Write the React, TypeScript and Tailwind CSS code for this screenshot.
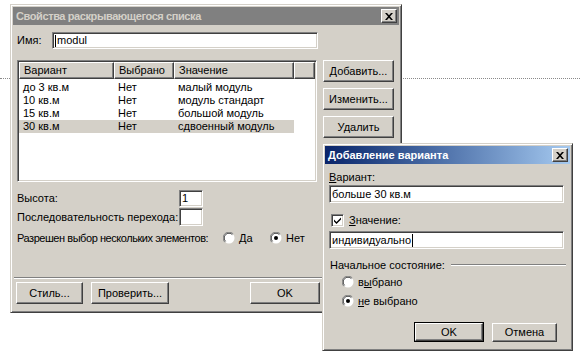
import type { ReactNode } from 'react'

const font = { fontFamily: '"Liberation Sans", Arial, sans-serif' }

const sunken =
  'border border-t-[#808080] border-l-[#808080] border-b-white border-r-white bg-white shadow-[inset_1px_1px_0_#404040,inset_-1px_-1px_0_#d4d0c8]'
const raised =
  'border border-t-white border-l-white border-b-[#404040] border-r-[#404040] bg-[#d4d0c8] shadow-[inset_-1px_-1px_0_#808080,inset_1px_1px_0_#d4d0c8]'

function CloseBox() {
  return (
    <div className={`${raised} flex h-[14px] w-[16px] items-center justify-center`}>
      <svg width="8" height="7" viewBox="0 0 8 7">
        <path d="M0 0h2l2 2.2L6 0h2L5 3.5 8 7H6L4 4.8 2 7H0l3-3.5z" fill="#000" />
      </svg>
    </div>
  )
}

function Radio({ checked }: { checked?: boolean }) {
  return (
    <svg width="12" height="12" viewBox="0 0 12 12" className="shrink-0">
      <circle cx="6" cy="6" r="5.5" fill="#fff" />
      <path d="M10.2 1.8A5.5 5.5 0 0 0 1.8 10.2" stroke="#808080" strokeWidth="1" fill="none" />
      <path d="M9.4 2.6A4.4 4.4 0 0 0 2.6 9.4" stroke="#404040" strokeWidth="1" fill="none" />
      {checked && <circle cx="6" cy="6" r="2" fill="#000" />}
    </svg>
  )
}

function Checkbox() {
  return (
    <div className={`${sunken} flex h-[13px] w-[13px] shrink-0 items-center justify-center`}>
      <svg width="7" height="7" viewBox="0 0 7 7">
        <path d="M0 2.5l2.5 2.5L7 0.5V2.5L2.5 7 0 4.5z" fill="#000" />
      </svg>
    </div>
  )
}

function Btn({ children, w, def }: { children: ReactNode; w: string; def?: boolean }) {
  return (
    <div className={def ? 'border border-black' : ''}>
      <div className={`${raised} ${w} ${def ? 'h-[18px]' : 'h-[22px]'} flex items-center justify-center text-[11px]`}>
        {children}
      </div>
    </div>
  )
}

const rows = [
  ['до 3 кв.м', 'Нет', 'малый модуль'],
  ['10 кв.м', 'Нет', 'модуль стандарт'],
  ['15 кв.м', 'Нет', 'большой модуль'],
  ['30 кв.м', 'Нет', 'сдвоенный модуль'],
]

function MainDialog() {
  return (
    <div className="absolute left-[10px] top-[4px] h-[309px] w-[392px] border border-t-[#d4d0c8] border-l-[#d4d0c8] border-b-[#404040] border-r-[#404040] bg-[#d4d0c8] p-[2px] shadow-[inset_1px_1px_0_#fff,inset_-1px_-1px_0_#808080]">
      <div className="flex h-[18px] items-center justify-between bg-[#808080] pl-[3px] pr-[2px]">
        <span className="text-[11px] font-bold tracking-[-0.4px] text-[#d4d0c8]">Свойства раскрывающегося списка</span>
        <CloseBox />
      </div>

      <div className="mt-[7px] flex items-center pl-[4px] text-[11px]">
        <span className="w-[35px]">Имя:</span>
        <div className={`${sunken} flex h-[17px] w-[266px] items-center pl-[2px]`}>
          <span className="mr-[1px] h-[12px] w-px bg-black" />
          modul
        </div>
      </div>

      <div className="mt-[11px] flex pl-[4px] text-[11px]">
        <div className={`${sunken} h-[122px] w-[300px] p-px`}>
          <div className="flex">
            <div className={`${raised} flex h-[17px] w-[95px] items-center pl-[4px]`}>Вариант</div>
            <div className={`${raised} flex h-[17px] w-[60px] items-center pl-[4px]`}>Выбрано</div>
            <div className={`${raised} flex h-[17px] w-[120px] items-center pl-[4px]`}>Значение</div>
            <div className={`${raised} h-[17px] flex-1`} />
          </div>
          <div className="mt-[2px] flex flex-col">
            {rows.map((r, i) => (
              <div key={i} className={`flex h-[13px] w-[275px] items-center ${i === 3 ? 'bg-[#d4d0c8]' : ''}`}>
                <span className="w-[95px] pl-[4px]">{r[0]}</span>
                <span className="w-[60px] pl-[4px]">{r[1]}</span>
                <span className="pl-[4px]">{r[2]}</span>
              </div>
            ))}
          </div>
        </div>
        <div className="ml-[6px] flex flex-col gap-[6px]">
          <Btn w="w-[71px]">Добавить...</Btn>
          <Btn w="w-[71px]">Изменить...</Btn>
          <Btn w="w-[71px]">Удалить</Btn>
        </div>
      </div>

      <div className="mt-[8px] flex items-center pl-[4px] text-[11px]">
        <span className="w-[162px]">Высота:</span>
        <div className={`${sunken} flex h-[17px] w-[24px] items-center pl-[2px]`}>1</div>
      </div>
      <div className="mt-px flex items-center pl-[4px] text-[11px]">
        <span className="w-[162px] whitespace-nowrap">Последовательность перехода:</span>
        <div className={`${sunken} h-[18px] w-[24px]`} />
      </div>
      <div className="mt-[4px] flex h-[16px] items-center pl-[4px] text-[11px]">
        <span className="w-[206px] shrink-0 whitespace-nowrap tracking-[-0.45px]">Разрешен выбор нескольких элементов:</span>
        <Radio />
        <span className="ml-[4px] w-[31px]">Да</span>
        <Radio checked />
        <span className="ml-[4px]">Нет</span>
      </div>

      <div className="mx-px mt-[31px] border-t border-b border-t-[#808080] border-b-white" />

      <div className="mt-[3px] flex pl-[3px] text-[11px]">
        <Btn w="w-[67px]">Стиль...</Btn>
        <div className="ml-[8px]">
          <Btn w="w-[78px]">Проверить...</Btn>
        </div>
        <div className="ml-[81px]">
          <Btn w="w-[70px]">OK</Btn>
        </div>
      </div>
    </div>
  )
}

function AddDialog() {
  return (
    <div className="absolute left-[322px] top-[143px] h-[208px] w-[251px] border border-t-[#d4d0c8] border-l-[#d4d0c8] border-b-[#404040] border-r-[#404040] bg-[#d4d0c8] p-[2px] shadow-[inset_1px_1px_0_#fff,inset_-1px_-1px_0_#808080]">
      <div className="flex h-[18px] items-center justify-between bg-gradient-to-r from-[#0a246a] to-[#a6caf0] pl-[3px] pr-[2px]">
        <span className="text-[11px] font-bold text-white">Добавление варианта</span>
        <CloseBox />
      </div>

      <div className="mt-[6px] flex h-[14px] items-center pl-[4px] text-[11px]">
        <span>
          <u>В</u>ариант:
        </span>
      </div>
      <div className={`${sunken} ml-[4px] mt-px flex h-[18px] w-[235px] items-center pl-[2px] text-[11px]`}>
        больше 30 кв.м
      </div>

      <div className="mt-[10px] flex h-[14px] items-center gap-[5px] pl-[6px] text-[11px]">
        <Checkbox />
        <span>
          <u>З</u>начение:
        </span>
      </div>
      <div className={`${sunken} ml-[4px] mt-[4px] flex h-[18px] w-[235px] items-center pl-[2px] text-[11px]`}>
        индивидуально
        <span className="ml-px h-[13px] w-px bg-black" />
      </div>

      <div className="mt-[9px] flex h-[14px] items-center pl-[5px] text-[11px]">
        <span>Начальное состояние:</span>
        <div className="ml-[6px] w-[115px] border-t border-b border-t-[#808080] border-b-white" />
      </div>
      <div className="mt-[3px] flex h-[14px] items-center gap-[4px] pl-[17px] text-[11px]">
        <Radio />
        <span>
          в<u>ы</u>брано
        </span>
      </div>
      <div className="mt-[5px] flex h-[14px] items-center gap-[4px] pl-[17px] text-[11px]">
        <Radio checked />
        <span>
          <u>н</u>е выбрано
        </span>
      </div>

      <div className="mt-[14px] flex justify-end gap-[8px] pr-[13px]">
        <Btn w="w-[68px]" def>
          OK
        </Btn>
        <div className="pt-px">
          <div className={`${raised} flex h-[19px] w-[65px] items-center justify-center text-[11px]`}>Отмена</div>
        </div>
      </div>
    </div>
  )
}

export default function App() {
  return (
    <div className="relative h-[359px] w-[580px] overflow-hidden bg-white text-black" style={font}>
      <div className="mt-[78px] border-t border-dotted border-[#8a8a8a]" />
      <MainDialog />
      <AddDialog />
    </div>
  )
}
